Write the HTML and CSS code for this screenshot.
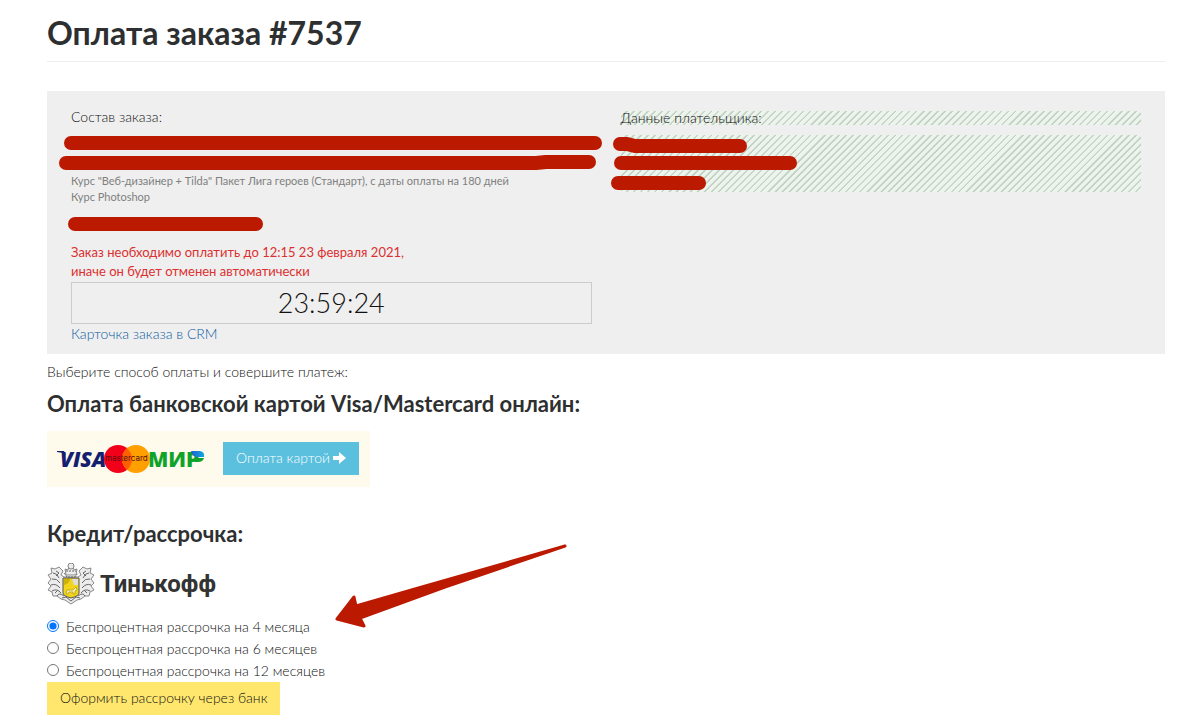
FILE: index.html
```
<!DOCTYPE html>
<html lang="ru">
<head>
    <meta charset="UTF-8">
    <meta name="viewport" content="width=device-width, initial-scale=1.0">
    <title>Оплата заказа #7537</title>
    <link rel="stylesheet" href="styles.css">
</head>
<body>
    <div class="container">
        <h1>Оплата заказа #7537</h1>

        <div class="order">
            <div class="order-col">
                <div class="order-title">Состав заказа:</div>
                <div class="hidden-lines">
                    <svg class="marker" width="560" height="50" viewBox="0 0 560 50" aria-hidden="true">
                        <path d="M15 13H539"/>
                        <path d="M10 33H480L490 32H533"/>
                    </svg>
                </div>
                <div class="order-desc">
                    Курс "Веб-дизайнер + Tilda" Пакет Лига героев (Стандарт), с даты оплаты на 180 дней<br>
                    Курс Photoshop
                </div>
                <div class="hidden-price">
                    <svg class="marker" width="560" height="36" viewBox="0 0 560 36" aria-hidden="true">
                        <path d="M19 22H200"/>
                    </svg>
                </div>
                <div class="order-deadline">
                    Заказ необходимо оплатить до 12:15 23 февраля 2021,<br>
                    иначе он будет отменен автоматически
                </div>
                <div class="timer">23:59:24</div>
                <a href="#" class="crm-link">Карточка заказа в CRM</a>
            </div>
            <div class="order-col">
                <div class="payer-title">Данные плательщика:</div>
                <div class="payer-data">
                    <svg class="marker" width="220" height="66" viewBox="0 0 220 66" aria-hidden="true">
                        <path d="M14 12H21L29 14H134"/>
                        <path d="M15 31H184"/>
                        <path d="M12 51H93"/>
                    </svg>
                </div>
            </div>
        </div>

        <p class="choose">Выберите способ оплаты и совершите платеж:</p>

        <h2>Оплата банковской картой Visa/Mastercard онлайн:</h2>
        <div class="card-pay">
            <svg class="card-logos" width="150" height="32" viewBox="0 0 150 32" role="img" aria-label="Visa, Mastercard, МИР">
                <defs>
                    <linearGradient id="mir">
                        <stop offset="0" stop-color="#1f5fd0"/>
                        <stop offset="1" stop-color="#11a8e0"/>
                    </linearGradient>
                </defs>
                <path d="M0 8H7L9 12Q5 9 0 9Z" fill="#14206f"/>
                <text class="visa" x="3" y="24">VISA</text>
                <circle cx="61" cy="16" r="14" fill="#f2001a"/>
                <circle cx="79" cy="16" r="14" fill="#ff9f00"/>
                <path d="M70 5.300A14 14 0 0 1 70 26.700A14 14 0 0 1 70 5.300Z" fill="#ff5f00"/>
                <text class="mastercard" x="48" y="18">mastercard</text>
                <text class="mir" x="91" y="24">МИР</text>
                <path d="M134 8H143Q148 9 147 14H139Q135 13 134 8Z" fill="url(#mir)"/>
                <path d="M138 15H147Q146 19 141 19H138Z" fill="#0fa32b"/>
            </svg>
            <button type="button" class="btn btn-info">
                Оплата картой
                <svg width="13" height="12" viewBox="0 0 13 12" aria-hidden="true">
                    <path d="M0 4H6V0L13 6L6 12V8H0Z" fill="#fff"/>
                </svg>
            </button>
        </div>

        <h2>Кредит/рассрочка:</h2>
        <div class="bank">
            <svg width="48" height="42" viewBox="0 0 48 42" aria-hidden="true">
                <g fill="#ececec" stroke="#888" stroke-width="1">
                    <path d="M17 14L14 12L16 8L12 4L8 6L4 5L5 10L1 12L4 16L1 20L4 23L1 27L5 29L6 33L10 33L14 36L18 37L24 41L30 37L34 36L38 33L42 33L43 29L47 27L44 23L47 20L44 16L47 12L43 10L44 5L40 6L36 4L32 8L34 12L31 14Z"/>
                    <path d="M19 12L18 6L21 7L22 3H26L27 7L30 6L29 12Z"/>
                    <circle cx="24" cy="3" r="3"/>
                </g>
                <g fill="none" stroke="#666" stroke-width="1">
                    <path d="M6 10Q10 10 12 15M5 16Q10 15 13 20M4 22Q9 20 13 25M5 28Q10 25 14 30M10 33Q12 29 17 33M42 10Q38 10 36 15M43 16Q38 15 35 20M44 22Q39 20 35 25M43 28Q38 25 34 30M38 33Q36 29 31 33"/>
                    <path d="M9 8L12 10L9 13M39 8L36 10L39 13M11 27L8 30M37 27L40 30M15 35L19 34L24 38L29 34L33 35"/>
                    <path d="M17 10L20 14H28L31 10M19 8H29" stroke-dasharray="2 1"/>
                </g>
                <path d="M16 15H32V30Q32 33 24 35Q16 33 16 30Z" fill="#f0d51c" stroke="#555"/>
                <path d="M17 16H23Q22 21 17 22Z" fill="#cdb20a"/>
                <path d="M25 16H31V22H27Z" fill="#ddd"/>
                <path d="M19 31L20 27H26L29 24L30 27L28 28V31H26V29H22L21 31Z" fill="#f7f1c2" stroke="#c4ab18" stroke-width="1"/>
            </svg>
            <span class="bank-name">Тинькофф</span>
        </div>

        <form class="credit">
            <label class="radio">
                <input type="radio" name="term" value="4" checked>
                Беспроцентная рассрочка на 4 месяца
            </label>
            <label class="radio">
                <input type="radio" name="term" value="6">
                Беспроцентная рассрочка на 6 месяцев
            </label>
            <label class="radio">
                <input type="radio" name="term" value="12">
                Беспроцентная рассрочка на 12 месяцев
            </label>
            <button type="button" class="btn btn-credit">Оформить рассрочку через банк</button>
            <svg class="arrow" width="234" height="88" viewBox="0 0 234 88" aria-hidden="true">
                <path d="M2 76L19 54L21 63L80 46L230 3L110 44L25 75L29 83Z"/>
            </svg>
        </form>
    </div>
</body>
</html>
```
FILE: styles.css
```
body {
    margin: 0;
    font-family: Lato, "Open Sans", sans-serif;
    font-size: 14px;
    font-weight: 300;
    line-height: 20px;
    color: #111;
    background: #fff;
}

.container {
    padding: 12px 35px 12px 47px;
}

h1 {
    margin: 0 0 29px;
    padding-bottom: 7px;
    border-bottom: 1px solid #eee;
    font-size: 32px;
    line-height: 42px;
    font-weight: 700;
    color: #2d2f30;
}

h2 {
    margin: 0;
    font-size: 22px;
    line-height: 24px;
    font-weight: 700;
    color: #2d2f30;
}

.order {
    display: grid;
    grid-template-columns: 1fr 1fr;
    gap: 29px;
    padding: 16px 24px 10px;
    background: #efefef;
}

.order-title {
    margin-bottom: 6px;
}

/* Marker strokes over private data */
.hidden-lines,
.hidden-price,
.payer-data {
    position: relative;
}

.hidden-lines {
    height: 40px;
}

.hidden-price {
    height: 38px;
}

.marker {
    position: absolute;
    top: -3px;
    left: -15px;
    fill: none;
    stroke: #bb1900;
    stroke-width: 14px;
    stroke-linecap: round;
    stroke-linejoin: round;
}

.order-desc {
    font-size: 11px;
    font-weight: 400;
    line-height: 16px;
    color: #808080;
}

.order-deadline {
    margin-bottom: 1px;
    font-size: 13px;
    font-weight: 400;
    line-height: 19px;
    color: #dc3030;
}

.timer {
    border: 1px solid #ccc;
    font-size: 27px;
    line-height: 40px;
    text-align: center;
    color: #111;
}

.crm-link {
    display: block;
    color: #0d5ca0;
    text-decoration: none;
}

.payer-title,
.payer-data {
    background: repeating-linear-gradient(135deg, #edf3ed 0, #edf3ed 3px, #c3d3c3 4px, #c3d3c3 5px);
}

.payer-title {
    margin: 4px 0 10px;
    line-height: 14px;
}

.payer-data {
    height: 57px;
}

.choose {
    margin: 8px 0 10px;
}

.card-pay {
    display: flex;
    align-items: center;
    gap: 16px;
    width: fit-content;
    margin: 15px 0 35px;
    padding: 11px 11px 12px 10px;
    background: #fffbec;
}

.visa,
.mir {
    font-family: "Open Sans", sans-serif;
    font-size: 21px;
    font-weight: 800;
    fill: #14206f;
}

.visa {
    font-style: italic;
}

.mir {
    fill: #0fa32b;
}

.mastercard {
    font-family: Inter, sans-serif;
    font-size: 8px;
    font-weight: 400;
    fill: #5a1010;
}

.btn {
    height: 33px;
    padding: 0 13px 2px;
    border: none;
    font-family: inherit;
    font-size: 14px;
    font-weight: 300;
    cursor: pointer;
}

.btn-info {
    display: flex;
    align-items: center;
    gap: 3px;
    color: #fff;
    background: #5bc0de;
}

.btn-credit {
    color: #111;
    background: #ffe76e;
}

.bank {
    display: flex;
    align-items: center;
    gap: 5px;
    margin: 17px 0 11px;
}

.bank-name {
    font-family: Roboto, sans-serif;
    font-size: 24px;
    font-weight: 700;
    color: #333;
}

.credit {
    position: relative;
}

.radio {
    display: flex;
    gap: 7px;
    width: fit-content;
    line-height: 22px;
}

.radio input {
    width: 12px;
    height: 12px;
    margin: 4px 0 0;
}

.arrow {
    position: absolute;
    top: -73px;
    left: 288px;
    fill: #bb1900;
    stroke: #bb1900;
    stroke-width: 3px;
    stroke-linejoin: round;
}
```
